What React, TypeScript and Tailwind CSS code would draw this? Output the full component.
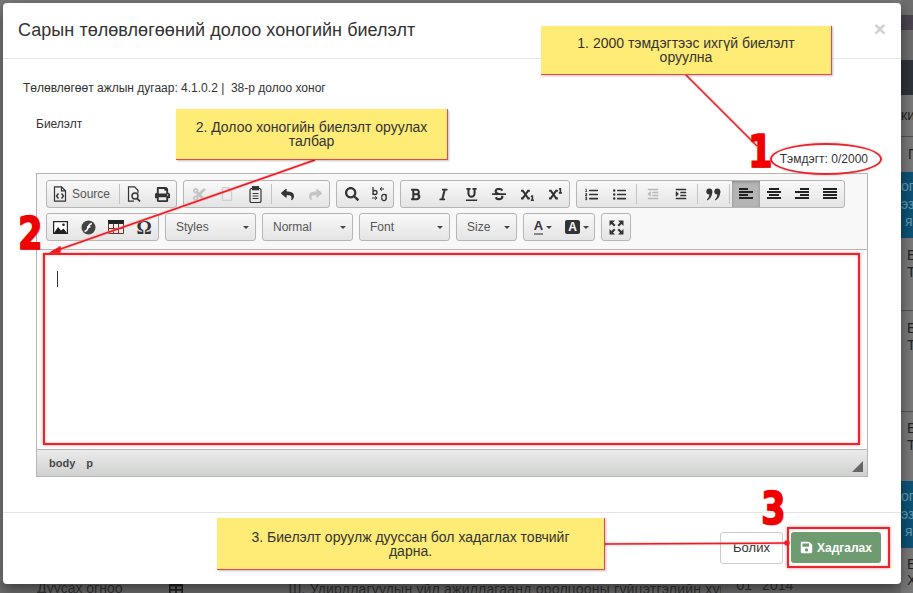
import React from "react";
import {
  FaBold,
  FaItalic,
  FaUnderline,
  FaStrikethrough,
  FaSubscript,
  FaSuperscript,
  FaListOl,
  FaListUl,
  FaOutdent,
  FaIndent,
  FaTable,
  FaSearch,
  FaCut,
  FaRegFile,
  FaReply,
  FaShare,
  FaPrint,
  FaSave,
} from "react-icons/fa";

const Btn = ({ children, active }: { children: React.ReactNode; active?: boolean }) => (
  <span
    className={`flex h-[26px] w-7 items-center justify-center text-[#333] ${active ? "bg-[#b5b5b5] shadow-[inset_0_1px_3px_#888]" : ""}`}
  >
    {children}
  </span>
);

const Sep = ({ wide }: { wide?: boolean }) => (
  <span className={`h-5 w-px bg-[#c4c4c4] ${wide ? "mx-[2px]" : "mx-[1.5px]"}`} />
);

const Group = ({ children, className = "" }: { children: React.ReactNode; className?: string }) => (
  <div
    className={`flex h-[28px] items-center overflow-hidden rounded-[3px] border border-[#b6b6b6] bg-gradient-to-b from-[#f9f9f9] to-[#e4e4e4] ${className}`}
  >
    {children}
  </div>
);

const Combo = ({ label, width }: { label: string; width: string }) => (
  <div
    className={`flex h-[28px] items-center justify-between rounded-[3px] border border-[#b6b6b6] bg-gradient-to-b from-[#f9f9f9] to-[#e4e4e4] pl-[10px] pr-[6px] text-xs text-[#555] ${width}`}
  >
    <span>{label}</span>
    <span className="h-0 w-0 border-x-[3px] border-t-[3px] border-x-transparent border-t-[#444]" />
  </div>
);

const Note = ({ children, className }: { children: React.ReactNode; className: string }) => (
  <div
    className={`absolute flex items-center justify-center border-r border-b border-[#f0444c] bg-[#ffec77] px-2 text-center text-sm leading-[14px] text-[#333] shadow-[1px_1px_2px_rgba(0,0,0,0.25)] ${className}`}
  >
    {children}
  </div>
);

const Num = ({ children, className }: { children: React.ReactNode; className: string }) => (
  <span
    className={`absolute scale-x-[0.8] font-['DejaVu_Sans'] text-[44px] leading-none font-bold text-[#f00000] [-webkit-text-stroke:1.5px_#f00000] [text-shadow:1px_1px_1px_rgba(120,0,0,0.5)] ${className}`}
  >
    {children}
  </span>
);

// moono style icons that the icon packages don't have
const DocCode = () => (
  <svg width="14" height="16" viewBox="0 0 14 16" fill="none" stroke="#333" strokeWidth="1.2">
    <path d="M1.5 .8h7l4 4v10.4h-11z" />
    <path d="M8.5 .8v4h4" />
    <path d="M5.5 7.5 3.5 10l2 2.5M8.5 7.5l2 2.5-2 2.5" strokeWidth="1.4" />
  </svg>
);

const DocSearch = () => (
  <svg width="15" height="16" viewBox="0 0 15 16" fill="none" stroke="#333" strokeWidth="1.2">
    <path d="M7 15.2H1.5V.8h6l3.5 3.5V7" />
    <circle cx="8" cy="10" r="3" strokeWidth="1.4" />
    <path d="m10 12.3 3 3" strokeWidth="1.8" />
  </svg>
);

const Clipboard = () => (
  <svg width="13" height="17" viewBox="0 0 13 17" fill="none" stroke="#333" strokeWidth="1.2">
    <rect x="1" y="2.5" width="11" height="14" rx="1.5" />
    <rect x="3.5" y=".7" width="6" height="3" fill="#333" />
    <path d="M3.5 7.5h6M3.5 10h6M3.5 12.5h6" />
  </svg>
);

const ReplaceIcon = () => (
  <svg width="16" height="16" viewBox="0 0 16 16" fill="none" stroke="#333" strokeWidth="1.3">
    <path d="M2 1v8M2 6.5a2 2 0 1 0 4 0 2 2 0 1 0-4 0" />
    <path d="M15 13V8M11 11.5a2.2 2.2 0 1 0 4 0 2.2 2.2 0 1 0-4 0" />
    <path d="M13 3H9l2-1.8M9 3l2 1.8M1 12h5l-2-1.8M6 12l-2 1.8" strokeWidth="1" />
  </svg>
);

const ImageIcon = () => (
  <svg width="15" height="13" viewBox="0 0 15 13">
    <rect x=".6" y=".6" width="13.8" height="11.8" fill="#fff" stroke="#222" strokeWidth="1.2" />
    <path d="M1 12 5 6l3 3.5 2.5-2L14 12z" fill="#222" />
    <circle cx="10.5" cy="3.8" r="1.3" fill="#222" />
  </svg>
);

const FlashIcon = () => (
  <svg width="15" height="15" viewBox="0 0 15 15">
    <circle cx="7.5" cy="7.5" r="7" fill="#444" />
    <path d="M11 3.5C8 4 7.5 6 7 8s-1.500 3-3.500 3.500" fill="none" stroke="#fff" strokeWidth="1.6" />
    <path d="M6 7h3.500" stroke="#fff" strokeWidth="1.4" />
  </svg>
);

const TableIcon = () => (
  <svg width="16" height="14" viewBox="0 0 16 14" fill="none">
    <rect x=".5" y=".5" width="15" height="3" fill="#222" stroke="#222" />
    <path d="M.5 3.500V13.500H15.500V3.500M.5 8.500H15.500M5.500 3.500V13.500M10.500 3.500V13.500" stroke="#7a2a20" />
  </svg>
);

const QuoteIcon = () => (
  <svg width="15" height="13" viewBox="0 0 15 13" fill="#333">
    <circle cx="3.300" cy="3.500" r="3" />
    <circle cx="11.300" cy="3.500" r="3" />
    <path d="M6.300 3.500C6.300 8 4 11 1.500 12.500L1 11.500C2.500 10 3.300 8.500 3.300 6.500zM14.300 3.500C14.300 8 12 11 9.500 12.500L9 11.500C10.500 10 11.300 8.500 11.300 6.500z" />
  </svg>
);

const ExpandIcon = () => (
  <svg width="15" height="15" viewBox="0 0 15 15" fill="#333">
    <path d="M.5.500h5.500l-2 2 2.500 2.500-1.500 1.500L2.500 4l-2 2zM14.500.500H9l2 2L8.500 5 10 6.500 12.500 4l2 2zM.5 14.500H6l-2-2L6.500 10 5 8.500 2.500 11l-2-2zM14.500 14.500H9l2-2L8.500 10 10 8.500l2.500 2.500 2-2z" />
  </svg>
);

const AlignIcon = ({ rows }: { rows: [number, number][] }) => (
  <svg width="16" height="14" viewBox="0 0 16 14" fill="#222">
    {rows.map(([x, w], i) => (
      <rect key={i} x={x} y={1 + (i * 12) / Math.max(rows.length, 1)} width={w} height="2" />
    ))}
  </svg>
);

const PageStrip = () => (
  <div className="flex w-[12px] flex-col overflow-hidden text-sm whitespace-nowrap text-[#222]">
    <div className="h-[60px] bg-[#6f6f6f] pt-[15px]">
      <div className="h-[15px] bg-[#4d4452]" />
    </div>
    <div className="h-[35px] bg-[#2d343a]" />
    <div className="h-[42px] border-b border-[#555] pt-[10px]">ки</div>
    <div className="h-[35px] pt-[7px] pl-[7px]">Г</div>
    <div className="h-[66px] bg-[#0d5478] pt-[6px] text-sm leading-[17.5px] text-[#6a9cb5]">
      ог
      <br />
      эз
      <br />
      &nbsp;я
    </div>
    <div className="h-[73px] border-b border-[#555] pt-[9px] pl-[6px] leading-[17px]">
      Е
      <br />Т
    </div>
    <div className="h-[101px] border-b border-[#555] pt-[9px] pl-[6px] leading-[17px]">
      Е
      <br />Т
    </div>
    <div className="h-[69px] pt-[8px] pl-[6px] leading-[17px]">
      Е
      <br />Т
    </div>
    <div className="h-[67px] bg-[#0d5478] pt-[7px] text-sm leading-[17.5px] text-[#6a9cb5]">
      ог
      <br />
      эз
      <br />
      &nbsp;я
    </div>
    <div className="flex-1 pt-[8px] pl-[6px] leading-[16px]">
      Е
      <br />Х
    </div>
  </div>
);

export default function App() {
  return (
    <div className="relative flex h-[593px] w-[913px] justify-end overflow-hidden bg-[#7b7b7b] font-['Liberation_Sans',sans-serif]">
      <PageStrip />

      {/* bottom of the page under the modal */}
      <div className="absolute bottom-0 left-0 flex h-[12px] w-[901px] items-start bg-[#6e6e6e] text-sm leading-[12px] whitespace-nowrap text-[#333]">
        <span className="ml-[37px] pt-[1px]">Дуусах огноо</span>
        <span className="ml-[46px] pt-[1px] text-[#222]">
          <FaTable size={14} />
        </span>
        <span className="-mt-[2px] ml-[106px] w-[432px] overflow-hidden text-sm tracking-[0.2px]">
          Ш. Удирдлагуудын үйл ажиллагаанд оролцооны гүйцэтгэлийн хуралдаан
        </span>
        <span className="-mt-[2px] ml-[16px]">01</span>
        <span className="-mt-[2px] ml-[10px]">2014</span>
      </div>

      {/* modal */}
      <div className="absolute top-[3px] left-[3px] flex h-[581px] w-[898px] flex-col rounded-[4px] bg-white shadow-[0_5px_15px_rgba(0,0,0,0.5)]">
        <div className="flex h-[56px] items-start justify-between border-b border-[#e5e5e5] px-[15px] pt-[15px]">
          <h4 className="text-lg leading-6 tracking-[0.05px] text-[#333]">Сарын төлөвлөгөөний долоо хоногийн биелэлт</h4>
          <span className="text-[21px] leading-[21px] font-bold text-[#cfcfcf]">×</span>
        </div>

        <div className="flex flex-1 flex-col px-[20px] pt-[21px] text-xs text-[#333]">
          <p className="leading-4">Төлөвлөгөөт ажлын дугаар: 4.1.0.2 |&nbsp; 38-р долоо хоног</p>
          <p className="mt-[20px] ml-[13px] leading-4">Биелэлт</p>
          <p className="mt-[19px] mr-[13px] text-right leading-4">Тэмдэгт: 0/2000</p>

          {/* editor */}
          <div className="mt-[6px] ml-[13px] flex h-[304px] w-[832px] flex-col border border-[#b6b6b6] bg-white">
            <div className="flex h-[76px] flex-col gap-[5px] border-b border-[#b6b6b6] bg-[#f8f8f8] px-[9px] pt-[6px]">
              <div className="flex gap-[6px]">
                <Group className="w-[131px]">
                  <span className="flex items-center gap-[5px] pl-[6px] pr-[7px] text-xs text-[#555]">
                    <DocCode />
                    Source
                  </span>
                  <Sep />
                  <Btn>
                    <DocSearch />
                  </Btn>
                  <Btn>
                    <FaPrint size={15} />
                  </Btn>
                </Group>
                <Group className="w-[147px] pl-[1px]">
                  <Btn>
                    <FaCut size={15} className="text-[#c4c4c4]" />
                  </Btn>
                  <Btn>
                    <FaRegFile size={14} className="text-[#d0d0d0]" />
                  </Btn>
                  <Btn>
                    <Clipboard />
                  </Btn>
                  <Sep />
                  <Btn>
                    <FaReply size={13} />
                  </Btn>
                  <Btn>
                    <FaShare size={13} className="text-[#c4c4c4]" />
                  </Btn>
                </Group>
                <Group className="w-[58px] pl-[1px]">
                  <Btn>
                    <FaSearch size={14} />
                  </Btn>
                  <Btn>
                    <ReplaceIcon />
                  </Btn>
                </Group>
                <Group className="w-[170px] pl-[1px]">
                  <Btn>
                    <FaBold size={13} />
                  </Btn>
                  <Btn>
                    <FaItalic size={13} />
                  </Btn>
                  <Btn>
                    <FaUnderline size={13} />
                  </Btn>
                  <Btn>
                    <FaStrikethrough size={14} />
                  </Btn>
                  <Btn>
                    <FaSubscript size={13} />
                  </Btn>
                  <Btn>
                    <FaSuperscript size={13} />
                  </Btn>
                </Group>
                <Group className="w-[269px] pl-[1px]">
                  <Btn>
                    <FaListOl size={13} />
                  </Btn>
                  <Btn>
                    <FaListUl size={13} />
                  </Btn>
                  <Sep wide />
                  <Btn>
                    <FaOutdent size={12} className="text-[#b8b8b8]" />
                  </Btn>
                  <Btn>
                    <FaIndent size={12} />
                  </Btn>
                  <Sep wide />
                  <Btn>
                    <QuoteIcon />
                  </Btn>
                  <Sep wide />
                  <Btn active>
                    <AlignIcon rows={[[1, 9], [1, 14], [1, 9], [1, 14]]} />
                  </Btn>
                  <Btn>
                    <AlignIcon rows={[[3, 10], [1, 14], [3, 10], [1, 14]]} />
                  </Btn>
                  <Btn>
                    <AlignIcon rows={[[6, 9], [1, 14], [6, 9], [1, 14]]} />
                  </Btn>
                  <Btn>
                    <AlignIcon rows={[[1, 14], [1, 14], [1, 14], [1, 14]]} />
                  </Btn>
                </Group>
              </div>
              <div className="flex gap-[6px]">
                <Group className="w-[113px]">
                  <Btn>
                    <ImageIcon />
                  </Btn>
                  <Btn>
                    <FlashIcon />
                  </Btn>
                  <Btn>
                    <TableIcon />
                  </Btn>
                  <Btn>
                    <span className="font-['Liberation_Serif'] text-[19px] leading-none font-bold">Ω</span>
                  </Btn>
                </Group>
                <Combo label="Styles" width="w-[91px]" />
                <Combo label="Normal" width="w-[91px]" />
                <Combo label="Font" width="w-[91px]" />
                <Combo label="Size" width="w-[61px]" />
                <Group className="w-[72px] pl-[2px]">
                  <span className="flex h-[26px] w-[34px] items-center justify-center gap-[3px]">
                    <span className="border-b-2 border-[#888] text-[13px] leading-[14px] font-bold text-[#333]">A</span>
                    <span className="h-0 w-0 border-x-[3px] border-t-[3px] border-x-transparent border-t-[#444]" />
                  </span>
                  <span className="flex h-[26px] w-[34px] items-center justify-center gap-[3px]">
                    <span className="flex h-[14px] w-[15px] items-center justify-center rounded-[2px] bg-[#333] text-[12px] font-bold text-white">
                      A
                    </span>
                    <span className="h-0 w-0 border-x-[3px] border-t-[3px] border-x-transparent border-t-[#444]" />
                  </span>
                </Group>
                <Group className="w-[30px] justify-center">
                  <ExpandIcon />
                </Group>
              </div>
            </div>

            <div className="flex-1 pt-[21px] pl-[20px]">
              <span className="block h-4 w-px bg-[#333]" />
            </div>

            <div className="relative flex h-[27px] items-center gap-[11px] border-t border-[#b6b6b6] bg-gradient-to-b from-[#ebebeb] to-[#cfd1cf] pl-[12px] text-[11px] font-bold text-[#484848]">
              <span>body</span>
              <span>p</span>
              <span className="absolute right-[4px] bottom-[4px] h-0 w-0 border-b-[11px] border-l-[11px] border-b-[#666] border-l-transparent" />
            </div>
          </div>
        </div>

        <div className="flex h-[72px] items-start justify-end gap-[8px] border-t border-[#e5e5e5] pt-[19px] pr-[20px]">
          <button className="h-[32px] w-[63px] rounded-[3px] border border-[#ccc] bg-white text-[13px] text-[#333]">Болих</button>
          <button className="flex h-[31px] w-[90px] items-center justify-center gap-[4px] rounded-[3px] bg-[#6f9b70] text-xs font-bold text-white">
            <FaSave size={13} />
            Хадгалах
          </button>
        </div>
      </div>

      {/* annotations */}
      <svg className="pointer-events-none absolute inset-0" width="913" height="593">
        <g stroke="#f8a0a0" strokeWidth="3" opacity="0.5">
          <line x1="686" y1="75" x2="757" y2="146" />
          <line x1="315" y1="160" x2="52" y2="252" />
          <line x1="605" y1="544" x2="787" y2="543" />
        </g>
        <g stroke="#f01a24" strokeWidth="1.5" fill="#f01a24">
          <line x1="686" y1="75" x2="757" y2="146" />
          <line x1="315" y1="160" x2="52" y2="252" />
          <polygon points="50,253 60,247 60,252" />
          <line x1="605" y1="544" x2="787" y2="543" />
          <circle cx="787" cy="543" r="2" />
        </g>
      </svg>
      <Note className="top-[26px] left-[541px] h-[49px] w-[291px]">
        <span>
          1. 2000 тэмдэгтээс ихгүй биелэлт
          <br />
          оруулна
        </span>
      </Note>
      <Note className="top-[109px] left-[176px] h-[51px] w-[272px]">
        <span>
          2. Долоо хоногийн биелэлт оруулах
          <br />
          талбар
        </span>
      </Note>
      <Note className="top-[518px] left-[217px] h-[52px] w-[388px]">
        <span>
          3. Биелэлт оруулж дууссан бол хадаглах товчийг
          <br />
          дарна.
        </span>
      </Note>

      <div className="absolute top-[143px] left-[770px] h-[32px] w-[112px] rounded-[50%] border-2 border-[#e8252d] shadow-[0_0_2px_rgba(240,60,60,0.5)]" />
      <div className="absolute top-[253px] left-[43px] h-[192px] w-[817px] border-2 border-[#e8252d] shadow-[0_0_3px_rgba(240,60,60,0.6),inset_0_0_3px_rgba(240,60,60,0.4)]" />
      <div className="absolute top-[527px] left-[787px] h-[41px] w-[103px] border-2 border-[#e8252d] shadow-[0_0_3px_rgba(240,60,60,0.6),inset_0_0_3px_rgba(240,60,60,0.4)]" />

      <Num className="top-[130px] left-[745px]">1</Num>
      <Num className="top-[212px] left-[15px]">2</Num>
      <Num className="top-[487px] left-[758px]">3</Num>
    </div>
  );
}
